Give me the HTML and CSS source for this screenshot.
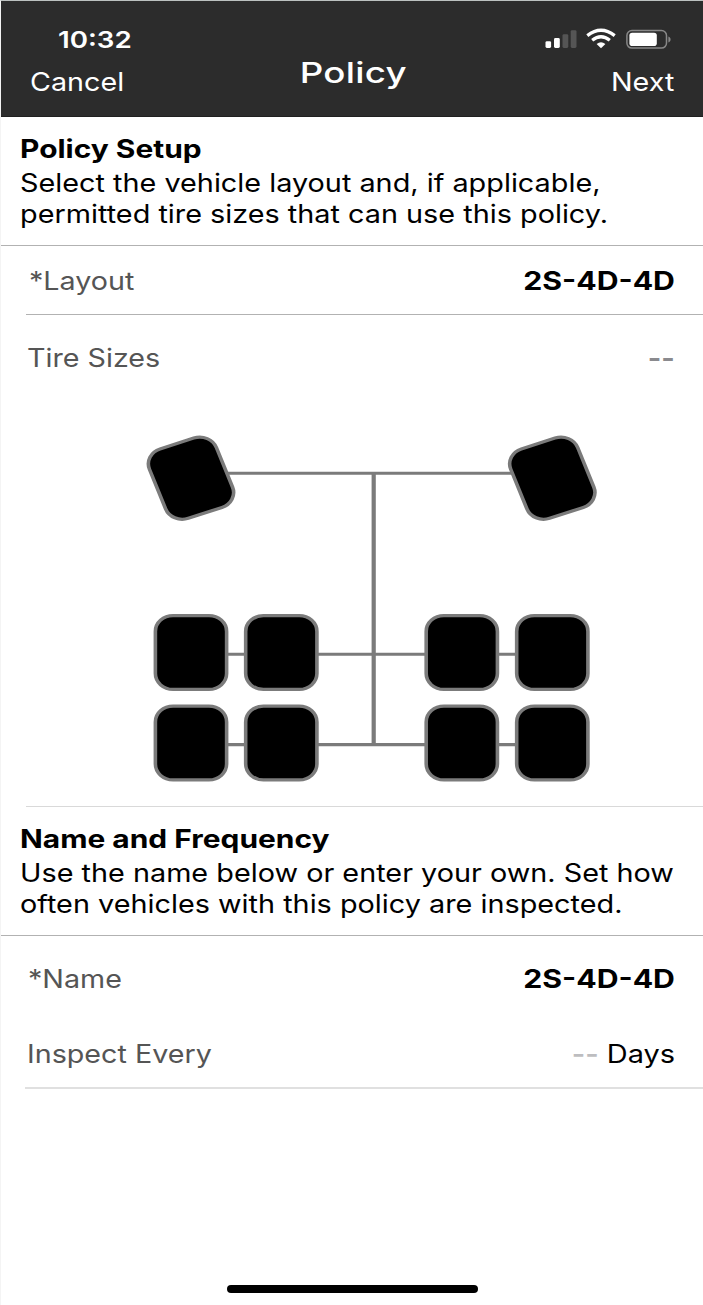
FILE: index.html
```
<!DOCTYPE html>
<html lang="en">
<head>
<meta charset="utf-8">
<title>Policy</title>
<link rel="stylesheet" href="styles.css">
</head>
<body>
<div class="screen">
  <header class="topbar">
    <div class="side">
      <span class="time">10:32</span>
      <span class="action cancel">Cancel</span>
    </div>
    <h1 class="title">Policy</h1>
    <div class="side side-right">
      <svg class="status" width="128" height="24" viewBox="0 0 128 24">
        <g fill="#fff">
          <rect x="0.5" y="15.2" width="5.6" height="6.8" rx="1.4"/>
          <rect x="9" y="12" width="5.8" height="10" rx="1.4"/>
          <rect x="17.5" y="8.2" width="5.8" height="13.8" rx="1.4" fill="#555"/>
          <rect x="25.7" y="4.2" width="5.8" height="17.8" rx="1.4" fill="#555"/>
        </g>
        <g fill="none" stroke="#fff" stroke-width="3.3">
          <path d="M42.3 9.6Q56 -1 69.7 9.6"/>
          <path d="M47.2 14.2Q56 7.2 64.8 14.2"/>
        </g>
        <path d="M51.6 18Q56 14.6 60.4 18L56 22.2Z" fill="#fff"/>
        <rect x="81.9" y="4.5" width="39.6" height="17.6" rx="5" fill="none" stroke="#888" stroke-width="1.5"/>
        <rect x="84.4" y="6.8" width="27.4" height="13.2" rx="2.8" fill="#fff"/>
        <path d="M123.4 10.4C126.3 11.3 126.3 15.5 123.4 16.4Z" fill="#888"/>
      </svg>
      <span class="action next">Next</span>
    </div>
  </header>

  <main>
    <section class="intro">
      <h2 class="heading">Policy Setup</h2>
      <p class="text">Select the vehicle layout and, if applicable,<br>permitted tire sizes that can use this policy.</p>
    </section>
    <div class="row row-layout">
      <span class="label">*Layout</span>
      <span class="value strong">2S-4D-4D</span>
    </div>
    <div class="row row-sizes">
      <span class="label">Tire Sizes</span>
      <span class="value dashes">--</span>
    </div>
    <div class="diagram">
      <svg width="702" height="406" viewBox="1 400 702 406">
        <defs>
          <g id="tire" transform="scale(1.12 1)">
            <rect x="-31.8" y="-36.9" width="63.6" height="73.8" rx="15.8" fill="#000" stroke="#7b7b7b" stroke-width="3.2"/>
          </g>
          <g id="steer" transform="scale(1.12 1) rotate(-20)">
            <rect x="-31.8" y="-36.9" width="63.6" height="73.8" rx="15.8" fill="#000" stroke="#7b7b7b" stroke-width="3.2"/>
          </g>
        </defs>
        <g stroke="#7b7b7b" stroke-width="3.1">
          <path d="M191 473.2H552M191 654.2H552M191 744.6H552"/>
          <path d="M373.7 473.2V744.6" stroke-width="4.2"/>
        </g>
        <use href="#steer" transform="translate(191 478.2)"/>
        <use href="#steer" transform="translate(552.3 478.2)"/>
        <use href="#tire" transform="translate(191 652.5)"/>
        <use href="#tire" transform="translate(281.3 652.5)"/>
        <use href="#tire" transform="translate(461.8 652.5)"/>
        <use href="#tire" transform="translate(552.3 652.5)"/>
        <use href="#tire" transform="translate(191 743)"/>
        <use href="#tire" transform="translate(281.3 743)"/>
        <use href="#tire" transform="translate(461.8 743)"/>
        <use href="#tire" transform="translate(552.3 743)"/>
      </svg>
    </div>
    <section class="intro">
      <h2 class="heading">Name and Frequency</h2>
      <p class="text">Use the name below or enter your own. Set how<br>often vehicles with this policy are inspected.</p>
    </section>
    <div class="row row-name">
      <span class="label">*Name</span>
      <span class="value strong">2S-4D-4D</span>
    </div>
    <div class="row row-inspect">
      <span class="label">Inspect Every</span>
      <span class="value"><span class="placeholder">--</span> Days</span>
    </div>
  </main>
  <div class="home"></div>
</div>
</body>
</html>
```
FILE: styles.css
```
* { box-sizing: border-box; }

body {
  margin: 0;
  background: #fff;
  color: #000;
  font: 400 25.5px/30.5px Inter, "Liberation Sans", sans-serif;
}

.screen {
  display: flex;
  flex-direction: column;
  height: 1305px;
  border-top: 1px solid #bcc1c0;
  border-left: 1px solid #f4f4f4;
  overflow: hidden;
}

.topbar {
  display: grid;
  grid-template-columns: 1fr auto 1fr;
  height: 116px;
  background: #2c2c2c;
  border-bottom: 1px solid #202020;
  color: #fff;
}

.side {
  display: flex;
  flex-direction: column;
  align-items: flex-start;
  padding: 23px 0 0 29px;
}

.side-right {
  align-items: flex-end;
  padding: 25px 29px 0 0;
}

.time {
  margin-left: 28px;
  font-size: 23.5px;
  font-weight: 600;
  line-height: 32px;
  transform: scaleX(1.18);
  transform-origin: 0 0;
}

.action {
  line-height: 32px;
  transform: scaleX(1.125);
}

.cancel {
  margin-top: 10px;
  transform-origin: 0 0;
}

.next {
  margin-top: 16px;
  transform-origin: 100% 0;
}

.status {
  margin-right: 1px;
}

.title {
  margin: 53px 0 0;
  font-size: 29px;
  font-weight: 550;
  line-height: 38px;
  letter-spacing: 0.2px;
  transform: translateX(1px) scaleX(1.265);
}

.intro {
  height: 129px;
  padding: 16px 0 0 19px;
  border-bottom: 1px solid #b2b2b2;
  white-space: nowrap;
}

.heading {
  margin: 0;
  font-size: 25.5px;
  font-weight: 700;
  line-height: 32px;
  transform: scaleX(1.173);
  transform-origin: 0 0;
}

.text {
  margin: 3px 0 0;
  transform: scaleX(1.13);
  transform-origin: 0 0;
}

.row {
  display: flex;
  align-items: center;
  justify-content: space-between;
  margin-left: 25px;
  padding-right: 28px;
  white-space: nowrap;
}

.label {
  margin-left: 1px;
  color: #555;
  transform: scaleX(1.125);
  transform-origin: 0 0;
}

.value {
  transform: scaleX(1.135);
  transform-origin: 100% 0;
}

.strong {
  font-weight: 700;
  transform: scaleX(1.186);
}

.row-layout {
  height: 69px;
  padding-top: 3px;
  border-bottom: 1px solid #b2b2b2;
}

.row-layout .label { margin-left: 3px; }

.row-sizes {
  height: 85px;
  padding-top: 2px;
}

.row-sizes .label { margin-left: 1px; }

.dashes {
  color: #8a8a8e;
  font-weight: 700;
}

.diagram {
  height: 407px;
  margin-left: 25px;
  border-bottom: 1px solid #d9d9d9;
}

.diagram svg {
  display: block;
  margin-left: -25px;
}

.row-name {
  height: 84px;
  padding-top: 2px;
}

.row-name .label { margin-left: 2px; }

.row-inspect {
  height: 69px;
  margin-left: 24px;
  padding-top: 2px;
  border-bottom: 2px solid #e0e0e0;
}

.row-inspect .label { margin-left: 2px; }

.placeholder {
  color: #bdbdc0;
  font-weight: 600;
}

.home {
  width: 251px;
  height: 8px;
  margin: auto auto 12px 226px;
  border-radius: 4px;
  background: #000;
}
```
